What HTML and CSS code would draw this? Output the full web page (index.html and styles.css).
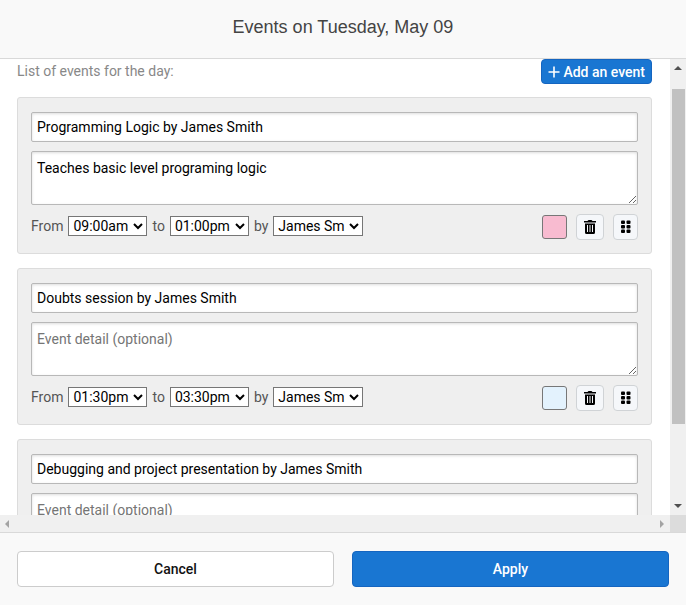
FILE: index.html
```html
<!DOCTYPE html>
<html lang="en">
<head>
    <meta charset="UTF-8">
    <meta name="viewport" content="width=device-width, initial-scale=1.0">
    <title>Events on Tuesday, May 09</title>
    <link rel="stylesheet" href="styles.css">
</head>
<body>
    <svg class="sprite" aria-hidden="true">
        <symbol id="icon-trash" viewBox="0 0 14 16">
            <path d="M1 2h3.500l1-1h3l1 1h3.500v1.500h-12z"/>
            <path fill-rule="evenodd" d="M2 4.500h10v9a1.500 1.500 0 0 1-1.500 1.500h-7a1.500 1.500 0 0 1-1.500-1.500zM4 6v7h1v-7zM6.500 6v7h1v-7zM9 6v7h1v-7z"/>
        </symbol>
        <symbol id="icon-grip" viewBox="0 0 10 14">
            <rect x="0" y="0.500" width="4" height="3.500" rx="1"/>
            <rect x="5.500" y="0.500" width="4" height="3.500" rx="1"/>
            <rect x="0" y="5" width="4" height="3.500" rx="1"/>
            <rect x="5.500" y="5" width="4" height="3.500" rx="1"/>
            <rect x="0" y="9.500" width="4" height="3.500" rx="1"/>
            <rect x="5.500" y="9.500" width="4" height="3.500" rx="1"/>
        </symbol>
    </svg>

    <div class="dialog">
        <header class="dialog-header">
            <h1>Events on Tuesday, May 09</h1>
        </header>

        <div class="scroll-area">
            <main class="content">
                <div class="list-header">
                    <span>List of events for the day:</span>
                    <button type="button" class="button-add">
                        <svg width="12" height="12" viewBox="0 0 12 12"><path d="M6 0.500v11M0.500 6h11" stroke="#fff" stroke-width="1.600"/></svg>
                        Add an event
                    </button>
                </div>

                <section class="event">
                    <input type="text" class="field" aria-label="Event title" value="Programming Logic by James Smith">
                    <textarea class="field detail" aria-label="Event detail" placeholder="Event detail (optional)">Teaches basic level programing logic</textarea>
                    <div class="event-row">
                        <label for="from1">From</label>
                        <select id="from1" class="time"><option>09:00am</option></select>
                        <label for="to1">to</label>
                        <select id="to1" class="time"><option>01:00pm</option></select>
                        <label for="by1">by</label>
                        <select id="by1" class="person"><option>James Smith</option></select>
                        <div class="actions">
                            <button type="button" class="color pink" aria-label="Color"></button>
                            <button type="button" class="tool" aria-label="Delete"><svg width="14" height="16"><use href="#icon-trash"/></svg></button>
                            <button type="button" class="tool grip" aria-label="Move"><svg width="10" height="14"><use href="#icon-grip"/></svg></button>
                        </div>
                    </div>
                </section>

                <section class="event">
                    <input type="text" class="field" aria-label="Event title" value="Doubts session by James Smith">
                    <textarea class="field detail" aria-label="Event detail" placeholder="Event detail (optional)"></textarea>
                    <div class="event-row">
                        <label for="from2">From</label>
                        <select id="from2" class="time"><option>01:30pm</option></select>
                        <label for="to2">to</label>
                        <select id="to2" class="time"><option>03:30pm</option></select>
                        <label for="by2">by</label>
                        <select id="by2" class="person"><option>James Smith</option></select>
                        <div class="actions">
                            <button type="button" class="color blue" aria-label="Color"></button>
                            <button type="button" class="tool" aria-label="Delete"><svg width="14" height="16"><use href="#icon-trash"/></svg></button>
                            <button type="button" class="tool grip" aria-label="Move"><svg width="10" height="14"><use href="#icon-grip"/></svg></button>
                        </div>
                    </div>
                </section>

                <section class="event">
                    <input type="text" class="field" aria-label="Event title" value="Debugging and project presentation by James Smith">
                    <textarea class="field detail" aria-label="Event detail" placeholder="Event detail (optional)"></textarea>
                </section>
            </main>

            <div class="bar-v">
                <svg width="16" height="17" viewBox="0 0 16 17"><path d="M4 11h8l-4-4z" fill="#505050"/></svg>
                <div class="track"><div class="thumb"></div></div>
                <svg width="16" height="17" viewBox="0 0 16 17"><path d="M4 6h8l-4 4z" fill="#505050"/></svg>
            </div>
            <div class="bar-h">
                <svg width="17" height="17" viewBox="0 0 17 17"><path d="M9 5v8l-4-4z" fill="#a3a3a3"/></svg>
                <svg width="17" height="17" viewBox="0 0 17 17"><path d="M7 5v8l4-4z" fill="#a3a3a3"/></svg>
            </div>
            <div class="corner"></div>
        </div>

        <footer class="dialog-footer">
            <button type="button" class="button">Cancel</button>
            <button type="button" class="button primary">Apply</button>
        </footer>
    </div>
</body>
</html>
```
FILE: styles.css
```css
* {
    box-sizing: border-box;
}

body {
    margin: 0;
    font-family: Roboto, "Liberation Sans", sans-serif;
    font-size: 14px;
    color: #555;
    background: #fff;
}

button, input, textarea, select {
    font-family: inherit;
    font-size: 14px;
}

.sprite {
    display: none;
}

.dialog {
    display: flex;
    flex-direction: column;
    height: 100vh;
}

.dialog-header {
    padding: 16px;
    background: #f9f9f9;
    border-bottom: 1px solid #d9d9d9;
    text-align: center;
}

.dialog-header h1 {
    margin: 0;
    font-family: "Liberation Sans", Arial, sans-serif;
    font-size: 18px;
    font-weight: 400;
    line-height: 22px;
    padding-bottom: 4px;
    color: #444;
}

/* list and scrollbars */
.scroll-area {
    flex: 1;
    min-height: 0;
    display: grid;
    grid-template-columns: 1fr 16px;
    grid-template-rows: 1fr 17px;
}

.content {
    min-height: 0;
    overflow: hidden;
    padding: 0 18px 0 17px;
}

.bar-v, .bar-h {
    display: flex;
    justify-content: space-between;
    background: #f0f0f0;
}

.bar-v {
    flex-direction: column;
    min-height: 0;
}

.track {
    flex: 1;
    padding: 13px 1px 0 2px;
}

.thumb {
    height: 82%;
    background: #c1c1c1;
}

.corner {
    background: #dcdcdc;
}

.list-header {
    display: flex;
    justify-content: space-between;
    align-items: flex-start;
    margin-bottom: 13px;
    line-height: 24px;
    color: #888;
}

.button-add {
    display: flex;
    align-items: center;
    gap: 3px;
    height: 25px;
    padding: 0 6px;
    border: 1px solid #1565c0;
    border-radius: 4px;
    background: #1976d2;
    color: #fff;
    font-weight: 500;
}

.event {
    margin-bottom: 14px;
    padding: 14px 13px 13px;
    border: 1px solid #dcdcdc;
    border-radius: 3px;
    background: #efefef;
}

.field {
    display: block;
    width: 100%;
    height: 30px;
    margin-bottom: 9px;
    padding: 0 5px;
    border: 1px solid #b8b8b8;
    border-radius: 2px;
    box-shadow: inset 0 1px 3px #ddd;
    background: #fff;
    color: #000;
}

.detail {
    height: 54px;
    padding: 6px 5px;
    line-height: 20px;
}

.field::placeholder {
    color: #757575;
}

.event-row {
    display: flex;
    align-items: flex-start;
    gap: 5px;
    line-height: 24px;
}

select {
    height: 20px;
    margin-top: 2px;
    border: 1px solid #767676;
    border-radius: 0;
    background-color: #fff;
    color: #000;
}

.time {
    width: 79px;
}

.person {
    width: 90px;
    padding-right: 1px;
}

.actions {
    display: flex;
    align-items: center;
    gap: 9px;
    margin-left: auto;
}

.color {
    width: 25px;
    height: 24px;
    border: 1px solid #777;
    border-radius: 3px;
}

.pink {
    background: #f8bbd0;
}

.blue {
    background: #e3f2fd;
}

.tool {
    display: flex;
    align-items: center;
    justify-content: center;
    width: 28px;
    height: 26px;
    padding: 0;
    border: 1px solid #d0d3d6;
    border-radius: 4px;
    background: #f5f7fa;
}

.grip {
    width: 25px;
}

.dialog-footer {
    display: flex;
    gap: 18px;
    padding: 18px 17px;
    border-top: 1px solid #d9d9d9;
    background: #f9f9f9;
}

.button {
    flex: 1;
    height: 36px;
    border: 1px solid #ccc;
    border-radius: 4px;
    background: #fff;
    color: #111;
    font-weight: 500;
}

.primary {
    border-color: #1565c0;
    background: #1976d2;
    color: #fff;
}
```
